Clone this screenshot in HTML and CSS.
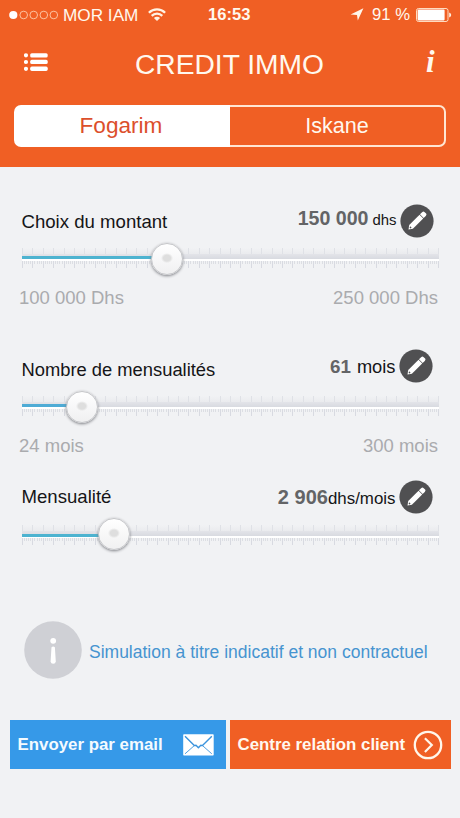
FILE: index.html
```html
<!DOCTYPE html>
<html lang="fr">
<head>
<meta charset="utf-8">
<title>Credit Immo</title>
<link rel="stylesheet" href="styles.css">
</head>
<body>
<header class="header">
  <div class="status">
    <div class="status-left">
      <svg class="signal" width="50" height="10" viewBox="0 0 50 10"><circle cx="4.3" cy="5" r="4.1" fill="#fff"/><g fill="none" stroke="#ffd9bd" stroke-width=".8"><circle cx="14.7" cy="5" r="3.8"/><circle cx="24.7" cy="5" r="3.8"/><circle cx="34.8" cy="5" r="3.8"/><circle cx="44.8" cy="5" r="3.8"/></g></svg>
      <span class="carrier">MOR IAM</span>
      <svg class="wifi" width="18" height="13" viewBox="0 0 18 13" fill="none" stroke="#fff3e4" stroke-width="2.3"><path d="M.9 4.7a11.5 11.5 0 0 1 16.2 0"/><path d="M3.7 7.9a7.5 7.5 0 0 1 10.6 0"/><path d="M9 13 5.9 10a4.4 4.4 0 0 1 6.2 0z" fill="#fff3e4" stroke="none"/></svg>
    </div>
    <span class="clock">16:53</span>
    <div class="status-right">
      <svg class="location" width="14" height="13" viewBox="0 0 14 13"><path d="M13.4.2 7.8 12.6 7 7 .6 6.4z" fill="#fff6ea"/></svg>
      <span class="percent">91 %</span>
      <svg class="battery" width="36" height="14" viewBox="0 0 36 14"><rect x=".5" y=".5" width="31.5" height="13" rx="2" fill="none" stroke="#ffdcc0"/><rect x="1.6" y="1.6" width="27" height="10.8" rx=".8" fill="#fff"/><path d="M33.2 4.5q2 .6 2 2.5t-2 2.5z" fill="#fff0df"/></svg>
    </div>
  </div>
  <div class="nav">
    <svg class="menu" width="24" height="18" viewBox="0 0 24 18" fill="#fff"><circle cx="2" cy="2.3" r="2.1"/><circle cx="2" cy="9" r="2.1"/><circle cx="2" cy="15.8" r="2.1"/><rect x="6.2" y=".2" width="17.5" height="4.3" rx="1.6"/><rect x="6.2" y="6.8" width="17.5" height="4.3" rx="1.6"/><rect x="6.2" y="13.6" width="17.5" height="4.3" rx="1.6"/></svg>
    <h1 class="title">CREDIT IMMO</h1>
    <span class="about">i</span>
  </div>
  <div class="tabs">
    <div class="tab tab-active">Fogarim</div>
    <div class="tab tab-idle">Iskane</div>
  </div>
</header>

<main class="main">
  <section class="field field-amount">
    <div class="field-head">
      <span class="label">Choix du montant</span>
      <span class="value"><b>150 000</b><span class="unit">dhs</span></span>
      <svg class="edit" width="34" height="34" viewBox="0 0 34 34"><circle cx="17" cy="17" r="16.6" fill="#505052"/><g transform="translate(17 17) rotate(-45)" fill="#fff"><path d="M-12 0-8.4-2.6H6.2V2.6H-8.4z"/><path d="M6.8-2.6H9.8q1.9 0 1.9 1.4v2.4q0 1.4-1.9 1.4H6.8z"/><path d="M-10-.5-8.6-1v2l-1.4-.5z" fill="#505052"/></g></svg>
    </div>
    <div class="slider">
      <div class="ticks-top"></div><div class="groove"><div class="fill"></div></div><div class="ticks-bottom"></div>
      <div class="thumb"></div>
    </div>
    <div class="range"><span>100 000 Dhs</span><span>250 000 Dhs</span></div>
  </section>

  <section class="field field-months">
    <div class="field-head">
      <span class="label">Nombre de mensualités</span>
      <span class="value"><b>61</b><span class="unit">mois</span></span>
      <svg class="edit" width="34" height="34" viewBox="0 0 34 34"><circle cx="17" cy="17" r="16.6" fill="#505052"/><g transform="translate(17 17) rotate(-45)" fill="#fff"><path d="M-12 0-8.4-2.6H6.2V2.6H-8.4z"/><path d="M6.8-2.6H9.8q1.9 0 1.9 1.4v2.4q0 1.4-1.9 1.4H6.8z"/><path d="M-10-.5-8.6-1v2l-1.4-.5z" fill="#505052"/></g></svg>
    </div>
    <div class="slider">
      <div class="ticks-top"></div><div class="groove"><div class="fill"></div></div><div class="ticks-bottom"></div>
      <div class="thumb"></div>
    </div>
    <div class="range"><span>24 mois</span><span>300 mois</span></div>
  </section>

  <section class="field field-payment">
    <div class="field-head">
      <span class="label">Mensualité</span>
      <span class="value"><b>2 906</b><span class="unit">dhs/mois</span></span>
      <svg class="edit" width="34" height="34" viewBox="0 0 34 34"><circle cx="17" cy="17" r="16.6" fill="#505052"/><g transform="translate(17 17) rotate(-45)" fill="#fff"><path d="M-12 0-8.4-2.6H6.2V2.6H-8.4z"/><path d="M6.8-2.6H9.8q1.9 0 1.9 1.4v2.4q0 1.4-1.9 1.4H6.8z"/><path d="M-10-.5-8.6-1v2l-1.4-.5z" fill="#505052"/></g></svg>
    </div>
    <div class="slider">
      <div class="ticks-top"></div><div class="groove"><div class="fill"></div></div><div class="ticks-bottom"></div>
      <div class="thumb"></div>
    </div>
  </section>

  <div class="notice">
    <svg width="58" height="58" viewBox="0 0 58 58"><circle cx="29" cy="29" r="28.8" fill="#cfd0d5"/><circle cx="29.2" cy="19.8" r="2.9" fill="#fff"/><path d="M27.5 26.2q1.7-1.2 3.4 0l.9 14.2q-.2 2.3-2.6 2.3t-2.6-2.3z" fill="#fff"/></svg>
    <span>Simulation à titre indicatif et non contractuel</span>
  </div>

  <div class="actions">
    <div class="button button-email">
      <span>Envoyer par email</span>
      <svg width="31" height="22" viewBox="0 0 31 22"><rect x=".2" y=".2" width="30.5" height="21.4" rx=".8" fill="#fff"/><g fill="none" stroke="#3b94dd" stroke-linejoin="round"><path d="M2 2.2 11.3 11.6 13 11.3 15.4 13.8 17.8 11.3 19.5 11.6 28.8 2.2" stroke-width="1.4"/><path d="M2 19.8 11.3 11.6M28.8 19.8 19.5 11.6" stroke-width=".9"/></g></svg>
    </div>
    <div class="button button-contact">
      <span>Centre relation client</span>
      <svg width="30" height="30" viewBox="0 0 30 30" fill="none" stroke="#fff6ea"><circle cx="15" cy="15" r="13.2" stroke-width="2.3"/><path d="M11.9 8.2 18.8 15l-6.9 7" stroke-width="2.2"/></svg>
    </div>
  </div>
</main>
</body>
</html>
```
FILE: styles.css
```css
* { box-sizing: border-box; }
body {
  margin: 0;
  width: 460px;
  height: 818px;
  overflow: hidden;
  background: #f1f2f4;
  font-family: "Liberation Sans", Arial, sans-serif;
}
svg { display: block; flex: none; }
span, b, h1 { white-space: nowrap; }

.header {
  height: 167px;
  background: #f05f24;
  color: #fff8ee;
}
.status {
  display: grid;
  grid-template-columns: 200px 60px 200px;
  align-items: center;
  height: 30px;
}
.status-left { display: flex; align-items: center; padding-left: 9px; }
.signal { margin-top: -1px; }
.carrier { margin-left: 4px; width: 76px; font-size: 17.2px; line-height: 30px; }
.wifi { margin-left: 9px; margin-top: -2px; }
.clock { padding-left: 8px; font-size: 16.6px; font-weight: bold; line-height: 30px; }
.status-right { display: flex; align-items: center; justify-content: flex-end; padding-right: 8px; }
.battery, .location { margin-top: -1px; }
.percent { margin: 0 6px 0 8px; font-size: 16.7px; line-height: 30px; }

.nav {
  display: flex;
  align-items: center;
  height: 75px;
  padding: 0 21px 11px 24px;
}
.menu { margin-top: 0; }
.title { margin: 0 0 0 87px; font-size: 28.2px; font-weight: normal; line-height: 64px; padding-top: 4px; }
.about {
  margin-left: auto;
  width: 13px;
  font: italic bold 31px/58px "Liberation Serif", serif;
}

.tabs {
  display: flex;
  height: 42px;
  margin: 0 14px;
}
.tab { flex: 1; text-align: center; }
.tab-active {
  padding-right: 2px;
  border-radius: 7px 0 0 7px;
  background: #fff;
  color: #dc4f2c;
  font-size: 22.6px;
  line-height: 42px;
}
.tab-idle {
  border: 2px solid #ffe6d2;
  border-left: 0;
  border-radius: 0 7px 7px 0;
  font-size: 21.6px;
  line-height: 38px;
}

.field-amount { height: 147px; padding-top: 37px; }
.field-months { height: 135px; padding-top: 35px; }
.field-payment { height: 172px; padding-top: 31px; }

.field-head {
  display: flex;
  align-items: center;
  height: 34px;
  padding: 0 26px 0 21.5px;
}
.field-months .field-head, .field-payment .field-head { padding-right: 27px; }
.label { font-size: 18.6px; line-height: 34px; color: #151517; }
.field-amount .label { padding-top: 1px; }
.field-months .label { padding-top: 8px; font-size: 18.35px; }
.field-payment .label { margin-top: -1px; }
.value { display: flex; align-items: baseline; margin-left: auto; margin-right: 3.5px; line-height: 34px; }
.value b { color: #636466; font-size: 19.6px; }
.unit { color: #151517; font-size: 18.3px; }
.field-amount .value { margin-top: -4px; }
.field-amount .unit { margin-left: 4px; font-size: 14.9px; }
.field-months .value { margin-top: 2px; }
.field-months .value b { font-size: 18.8px; }
.field-months .unit { margin-left: 6px; }
.field-payment .value { margin-top: 2px; }
.field-payment .value b { font-size: 20px; }
.field-payment .unit { font-size: 16.9px; }

.slider {
  position: relative;
  width: 417px;
  height: 22px;
  margin: 10px 0 0 21.5px;
}
.field-months .slider { margin-top: 13px; }
.field-payment .slider { margin-top: 11px; }
.ticks-top {
  height: 6px;
  background: repeating-linear-gradient(90deg, #dfe1e6 0 1px, transparent 1px 10.4px), linear-gradient(#f1f2f4, #eaebee);
}
.groove {
  height: 7px;
  border-bottom: 2px solid #fff;
  background: linear-gradient(#e3e4e9, #d8dae0);
}
.fill { position: relative; top: 2px; height: 3px; background: #4db3d0; }
.ticks-bottom {
  height: 7px;
  background:
    repeating-linear-gradient(90deg, #d8dae1 0 1px, transparent 1px 10.4px),
    repeating-linear-gradient(90deg, #dcdee3 0 1px, transparent 1px 2.08px) 0 0 / 100% 3px no-repeat;
}
.thumb {
  position: absolute;
  top: -5px;
  width: 32px;
  height: 32px;
  border: 1px solid #c5c6c9;
  border-radius: 50%;
  background:
    radial-gradient(ellipse 6px 5px at 50% 47%, #dedede 0 60%, transparent),
    linear-gradient(#fff, #f0f0f1);
  box-shadow: 0 1px 3px #808287;
}
.field-amount .fill { width: 145px; }
.field-amount .thumb { left: 129px; }
.field-months .fill { width: 60px; background: #4eabd5; }
.field-months .thumb { left: 44.5px; }
.field-payment .fill { width: 92px; top: 3px; }
.field-payment .thumb { left: 76px; top: -7px; }

.range {
  display: flex;
  justify-content: space-between;
  margin-top: 16px;
  padding: 0 22px 0 19px;
  color: #aaabae;
  font-size: 18.5px;
  line-height: 24px;
}

.notice {
  display: flex;
  align-items: center;
  height: 58px;
  margin-left: 23.5px;
  color: #4694d0;
  font-size: 17.5px;
}
.notice span { margin-left: 7.5px; padding-top: 4px; }

.actions {
  display: grid;
  grid-template-columns: 215.5px 221px;
  column-gap: 4.5px;
  margin: 41px 0 0 10px;
}
.button {
  display: flex;
  align-items: center;
  justify-content: space-between;
  height: 49px;
  padding: 0 8px 0 7.5px;
  color: #fff8ef;
  font-size: 16.85px;
  font-weight: bold;
}
.button span { line-height: 46px; margin-top: 1px; }
.button-email { padding-right: 11.5px; background: #3699e8; color: #f4fbff; }
.button-contact { background: #f05f24; }
```
